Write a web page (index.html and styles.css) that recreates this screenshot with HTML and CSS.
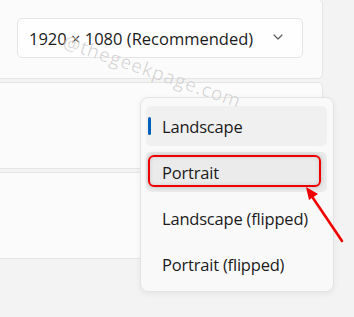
FILE: index.html
```html
<!DOCTYPE html>
<html>
<head>
<meta charset="utf-8">
<link rel="stylesheet" href="styles.css">
</head>
<body>
<div class="page">
  <div class="cards">
    <div class="card card-top">
      <div class="select">
        <span class="select-text">1920 × 1080 (Recommended)</span>
        <svg class="chevron" width="10" height="6" viewBox="0 0 10 6"><path d="M1 1 L5 5 L9 1" fill="none" stroke="#5f5f5f" stroke-width="1.2" stroke-linecap="round" stroke-linejoin="round"/></svg>
      </div>
    </div>
    <div class="card"></div>
    <div class="card"></div>
  </div>

  <div class="menu">
    <div class="item selected"><span class="indicator"></span>Landscape</div>
    <div class="item hover">Portrait</div>
    <div class="item">Landscape (flipped)</div>
    <div class="item">Portrait (flipped)</div>
  </div>

  <div class="watermark">@thegeekpage.com</div>

  <div class="callout"></div>
  <svg class="arrow" width="354" height="317" viewBox="0 0 354 317">
    <line x1="342" y1="242" x2="313" y2="199" stroke="#f00000" stroke-width="2.6" stroke-linecap="round"/>
    <polygon points="306,188 318,195 309,201" fill="#f00000"/>
  </svg>
</div>
</body>
</html>
```

FILE: styles.css
```css
* { box-sizing: border-box; }
html, body { margin: 0; padding: 0; }
body {
  background: #f3f3f3;
  font-family: "Open Sans", "Noto Sans", sans-serif;
  color: #1b1b1b;
  width: 354px;
  height: 317px;
  overflow: hidden;
}
.page { position: relative; width: 354px; height: 317px; }

.cards {
  display: flex;
  flex-direction: column;
  gap: 3px;
  width: 333px;
  margin: -1px 0 0 -10px;
}
.card {
  height: 87px;
  background: #fbfbfb;
  border: 1px solid #e5e5e5;
  border-radius: 5px;
}
.card-top {
  height: 80px;
  padding: 18px 0 0 26px;
}
.select {
  width: 286px;
  height: 40px;
  background: #fefefe;
  border: 1px solid #e5e5e5;
  border-radius: 5px;
  display: flex;
  align-items: center;
  justify-content: space-between;
  padding: 0 19px 0 11px;
}
.select-text { font-size: 16.5px; letter-spacing: 0; }
.chevron { margin-top: -2px; }

.watermark {
  position: absolute;
  z-index: 5;
  left: 67px;
  top: 33px;
  font-size: 19px;
  line-height: 19px;
  color: rgba(0,0,0,0.16);
  text-shadow: 0 0 1px rgba(255,255,255,0.9);
  transform: rotate(19deg);
  transform-origin: 0 0;
  letter-spacing: 0.8px;
  white-space: nowrap;
}

.menu {
  position: absolute;
  left: 140px;
  top: 98px;
  width: 194px;
  height: 195px;
  background: #f9f9f9;
  border: 1px solid #e3e3e3;
  border-radius: 8px;
  box-shadow: 0 2px 6px rgba(0,0,0,0.06);
  padding: 8px 6px 0 5px;
  display: flex;
  flex-direction: column;
  gap: 6px;
}
.item {
  position: relative;
  height: 40px;
  display: flex;
  align-items: center;
  padding-left: 16px;
  font-size: 16.5px;
  letter-spacing: -0.2px;
  border-radius: 5px;
}
.item.selected { background: #f0f0f0; }
.item.hover { background: #ebebeb; }
.indicator {
  position: absolute;
  left: 2px;
  top: 11px;
  width: 3px;
  height: 18px;
  border-radius: 2px;
  background: #005fb8;
}
.callout {
  position: absolute;
  z-index: 6;
  left: 148px;
  top: 156px;
  width: 173px;
  height: 32px;
  border: 2px solid #f00000;
  border-radius: 6px;
  box-shadow: 0 0 5px rgba(0,0,0,0.22), inset 0 0 4px rgba(0,0,0,0.12);
}
.arrow { position: absolute; z-index: 6; left: 0; top: 0; pointer-events: none; }
```
